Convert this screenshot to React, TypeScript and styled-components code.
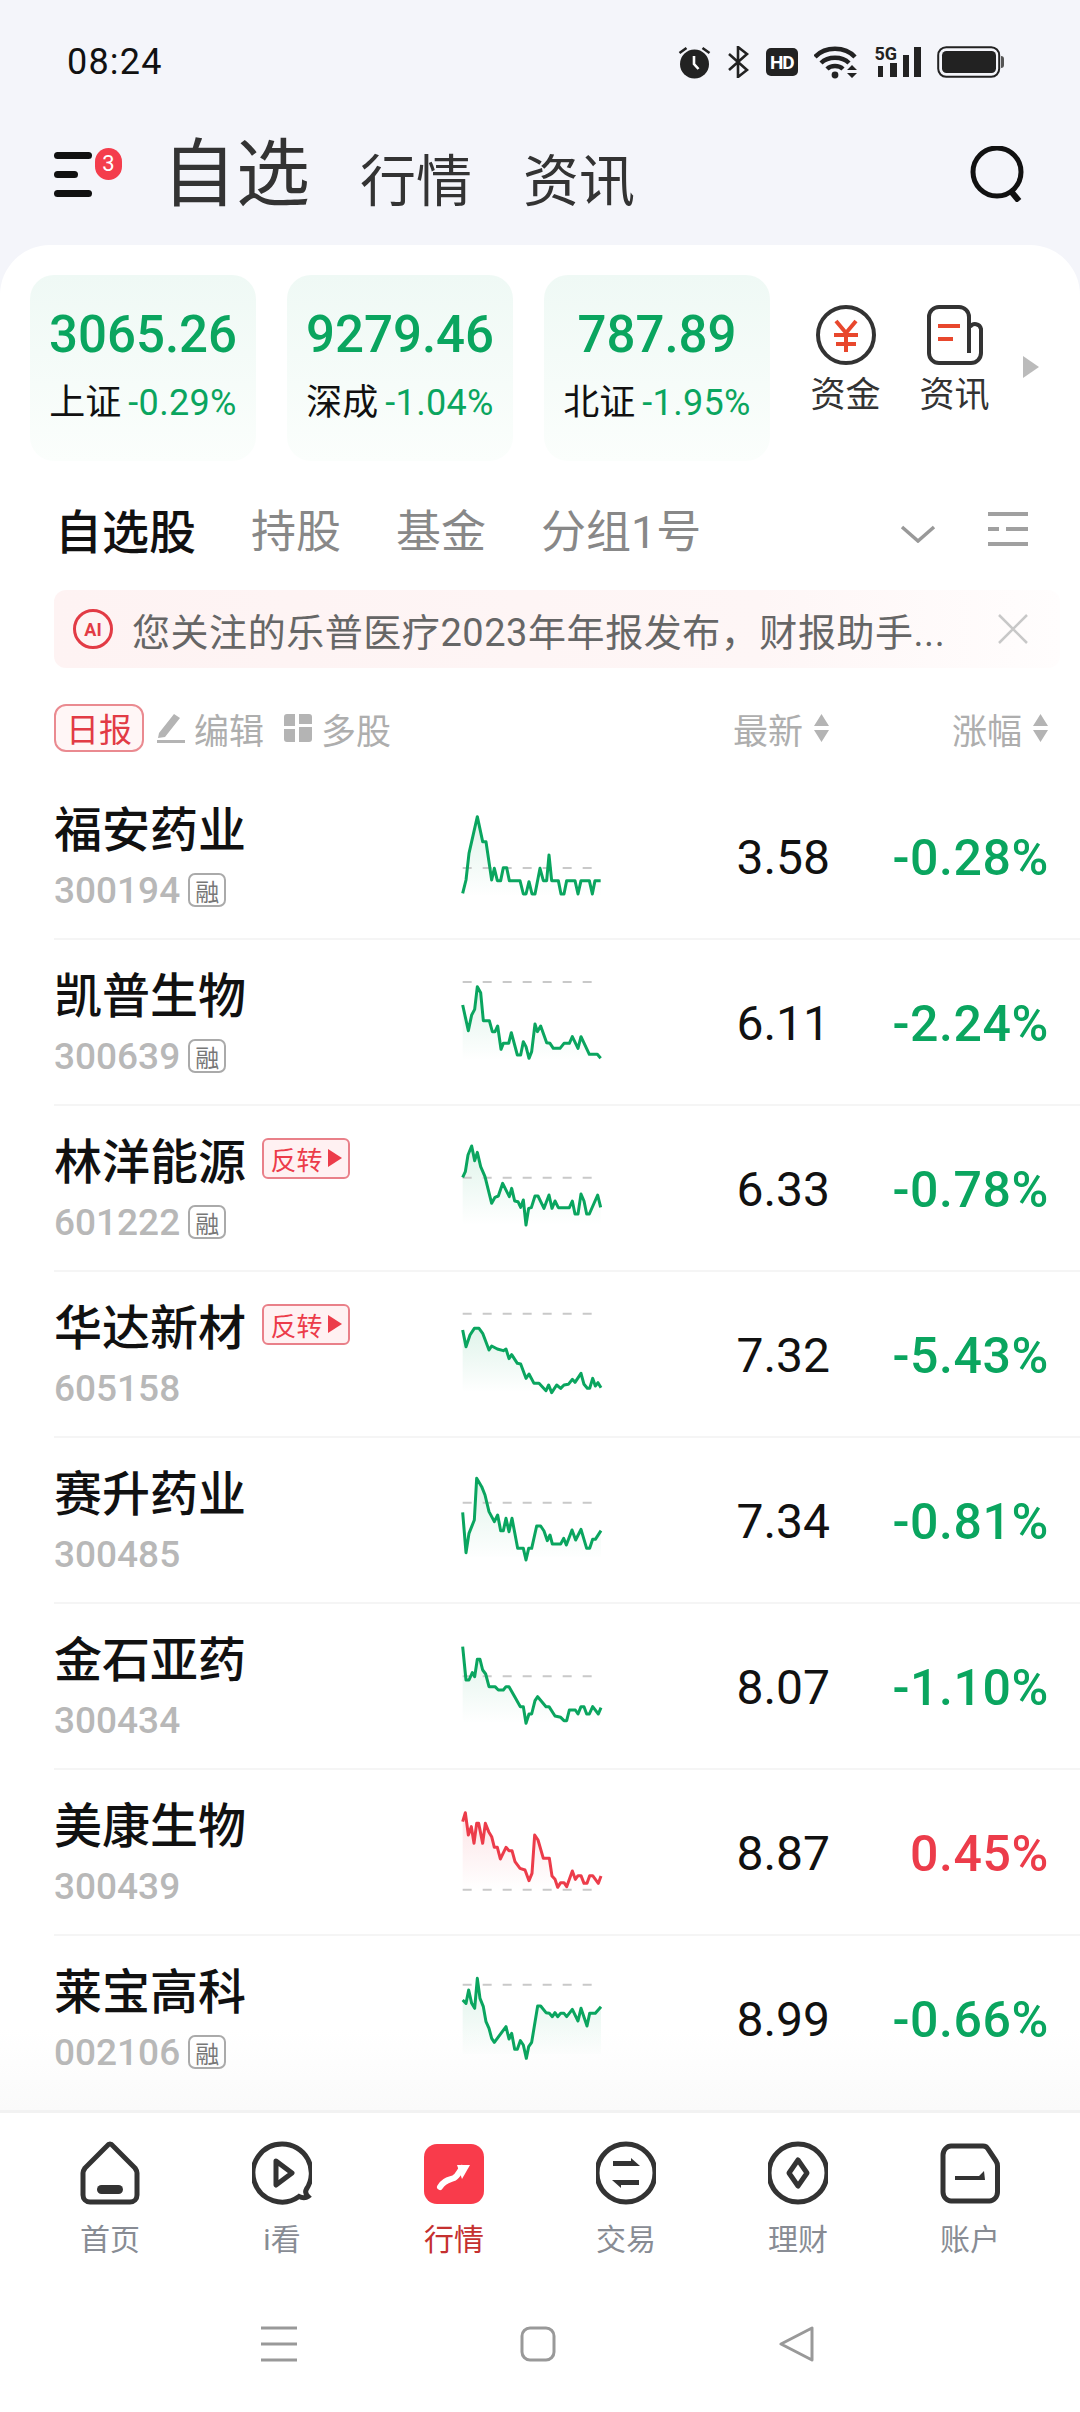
import React from "react";
import styled, { createGlobalStyle } from "styled-components";

const GREEN = "#0aa55f";
const RED = "#ec3c4a";
const INK = "#333333";

interface Stock {
  name: string;
  code: string;
  price: string;
  pct: string;
  rong?: boolean;
  flip?: boolean;
  up?: boolean;
  top: number; // y of the row's top edge in spark coords
  dash: number;
  floor: number;
  spark: string;
}

// spark coords are 3x px, traced off the chart strips
const stocks: Stock[] = [
  {
    name: "福安药业", code: "300194", price: "3.58", pct: "-0.28%", rong: true, top: -54, dash: 234, floor: 320,
    spark: "68,310 78,270 87,190 112,80 128,155 138,155 155,270 163,235 172,272 182,272 190,233 200,233 208,272 240,272 250,312 258,312 267,275 276,312 285,312 300,235 310,272 320,272 327,195 335,272 355,272 363,312 372,312 380,272 405,272 414,312 423,272 448,272 457,312 465,272 482,272",
  },
  {
    name: "凯普生物", code: "300639", price: "6.11", pct: "-2.24%", rong: true, top: 444, dash: 576, floor: 812,
    spark: "68,645 85,722 95,675 104,658 112,590 122,608 130,692 148,692 157,725 165,725 173,708 183,778 190,760 206,760 214,728 232,795 242,795 250,755 258,770 267,805 275,785 285,702 292,725 302,708 320,758 330,760 340,775 360,775 372,760 388,760 397,740 414,775 423,740 448,793 472,793 482,805",
  },
  {
    name: "林洋能源", code: "601222", price: "6.33", pct: "-0.78%", rong: true, flip: true, top: -48, dash: 173, floor: 312,
    spark: "68,172 76,155 84,105 95,78 104,122 112,97 122,140 135,170 155,250 165,232 175,228 188,190 208,230 215,205 224,243 234,245 242,262 250,240 258,315 266,265 274,263 285,228 294,228 312,265 327,225 336,265 345,243 355,263 388,263 397,243 405,282 414,282 423,222 432,243 440,282 448,282 473,225 482,262",
  },
  {
    name: "华达新材", code: "605158", price: "7.32", pct: "-5.43%", flip: true, top: 450, dash: 581, floor: 815,
    spark: "68,630 78,680 90,645 103,625 117,625 128,640 147,690 155,678 172,687 190,692 198,687 207,716 215,704 232,730 242,732 258,775 267,762 282,790 297,790 318,812 326,795 335,818 350,795 362,805 372,795 385,793 397,778 405,787 423,760 432,793 442,805 449,805 458,775 466,798 474,788 483,803",
  },
  {
    name: "赛升药业", code: "300485", price: "7.34", pct: "-0.81%", top: -42, dash: 158, floor: 320,
    spark: "68,187 78,308 87,250 103,210 110,85 125,110 135,135 147,185 163,215 173,195 182,242 190,242 198,205 207,245 216,205 233,295 250,295 258,330 266,295 275,295 290,228 302,228 312,243 322,272 330,255 337,282 362,282 371,265 379,285 396,240 407,270 423,238 440,295 449,295 458,268 466,268 483,242",
  },
  {
    name: "金石亚药", code: "300434", price: "8.07", pct: "-1.10%", top: 456, dash: 679, floor: 818,
    spark: "68,590 78,690 87,690 97,668 104,680 112,628 120,628 128,660 137,672 147,710 165,710 175,720 190,720 198,710 207,710 225,742 241,770 250,770 258,820 267,792 275,792 285,752 293,740 318,770 327,770 345,798 362,802 372,812 380,812 388,780 406,780 414,792 423,770 432,770 440,792 448,792 458,770 475,792 483,773",
  },
  {
    name: "美康生物", code: "300439", price: "8.87", pct: "0.45%", up: true, top: -66, dash: 299, floor: 299,
    spark: "68,95 76,68 85,135 94,110 102,160 110,100 116,100 128,160 136,100 146,125 155,140 163,172 172,172 181,207 198,172 207,182 216,182 225,215 240,235 255,240 267,272 276,250 284,135 294,150 310,205 328,205 336,258 345,268 353,292 362,278 372,278 380,290 397,243 406,268 414,257 423,257 432,280 441,280 449,257 458,257 475,280 483,258",
  },
  {
    name: "莱宝高科", code: "002106", price: "8.99", pct: "-0.66%", rong: true, top: 432, dash: 584, floor: 792,
    spark: "68,630 78,640 86,600 95,640 104,655 112,565 120,625 130,650 138,695 147,715 155,745 163,757 198,710 207,747 215,730 224,778 232,778 241,752 250,765 259,805 266,770 275,757 293,648 302,648 318,668 328,670 337,680 345,668 353,680 362,670 372,670 380,680 397,658 414,693 423,655 441,708 449,670 466,670 483,650",
  },
];

const indices = [
  { value: "3065.26", name: "上证", pct: "-0.29%" },
  { value: "9279.46", name: "深成", pct: "-1.04%" },
  { value: "787.89", name: "北证", pct: "-1.95%" },
];

function Spark({ stock, id }: { stock: Stock; id: string }) {
  const color = stock.up ? RED : GREEN;
  const first = stock.spark.split(" ")[0].split(",")[0];
  const last = stock.spark.split(" ").slice(-1)[0].split(",")[0];
  const area = `${first},${stock.floor} ${stock.spark} ${last},${stock.floor}`;
  return (
    <SparkSvg viewBox={`60 ${stock.top} 432 498`}>
      <defs>
        <linearGradient id={id} x1="0" y1="0" x2="0" y2="1">
          <stop offset="0" stopColor={color} stopOpacity={stock.up ? 0.14 : 0.13} />
          <stop offset="1" stopColor={color} stopOpacity="0" />
        </linearGradient>
      </defs>
      <polygon points={area} fill={`url(#${id})`} />
      <line x1="68" x2="456" y1={stock.dash} y2={stock.dash} stroke="#c9c9c9" strokeWidth="6" strokeDasharray="27 33" />
      <polyline points={stock.spark} fill="none" stroke={color} strokeWidth="9" strokeLinejoin="round" />
    </SparkSvg>
  );
}

function SortArrows() {
  return (
    <svg width="17" height="28" viewBox="0 0 17 28">
      <path d="M8.5 0 L16 12 H1 Z M1 16 H16 L8.5 28 Z" fill="#b4b4b4" />
    </svg>
  );
}

function StatusIcons() {
  return (
    <StatusIconRow>
      <svg width="33" height="34" viewBox="0 0 33 34">
        <circle cx="16.5" cy="19" r="14.5" fill="#222" />
        <path d="M16 11v8l4.500 5" fill="none" stroke="#fff" strokeWidth="2.6" />
        <path d="M1.500 8l7-5M31.500 8l-7-5" stroke="#222" strokeWidth="2.6" />
      </svg>
      <svg width="22" height="32" viewBox="0 0 22 32">
        <path d="M2 8l18 16-9 7V1l9 7L2 24" fill="none" stroke="#222" strokeWidth="2.6" />
      </svg>
      <HdChip>HD</HdChip>
      <svg width="44" height="34" viewBox="0 0 44 34">
        <path d="M1 12C11 1 31 1 41 12M7 18c7-7 21-7 28 0M13 24c4-4 12-4 16 0" fill="none" stroke="#222" strokeWidth="4.400" />
        <circle cx="21" cy="30" r="3.400" fill="#222" />
        <path d="M33 25h10l-5-5zM33 28h10l-5 5z" fill="#222" />
      </svg>
      <SignalWrap>
        <NetworkLabel>5G</NetworkLabel>
        <svg width="46" height="32" viewBox="0 0 46 32">
          <path d="M3 20h5v11H3zM15 17h7v14h-7zM28 9h6v22h-6zM39 1h7v30h-7z" fill="#222" />
        </svg>
      </SignalWrap>
      <svg width="67" height="32" viewBox="0 0 67 32">
        <rect x="1.200" y="1.200" width="61" height="29.600" rx="8" fill="none" stroke="#222" strokeWidth="2" />
        <rect x="5" y="5" width="54" height="22" rx="4.500" fill="#222" />
        <path d="M64 10c2 0 3 1 3 3v6c0 2-1 3-3 3z" fill="#555" />
      </svg>
    </StatusIconRow>
  );
}

const navItems = [
  {
    label: "首页",
    icon: (
      <>
        <path d="M30 3c-1 0-2 .6-3 2L5 27c-1 1.500-2 3-2 5v22c0 4 3 7 7 7h40c4 0 7-3 7-7V32c0-2-1-3.500-2-5L33 5c-1-1.400-2-2-3-2z" fill="none" stroke={INK} strokeWidth="5" />
        <rect x="17" y="44" width="26" height="9" rx="4.500" fill={INK} />
      </>
    ),
  },
  {
    label: "i看",
    icon: (
      <>
        <path d="M30 3a29 29 0 1 0 17 52.500c3 1.500 7 1.500 9 0-2-2-3-5-1.500-7.500A29 29 0 0 0 30 3z" fill="none" stroke={INK} strokeWidth="5" />
        <path d="M24 20l16 12-16 12z" fill="none" stroke={INK} strokeWidth="5" strokeLinejoin="round" />
      </>
    ),
  },
  {
    label: "行情",
    active: true,
    icon: (
      <>
        <rect x="0" y="3" width="60" height="60" rx="13" fill="#f93b4b" />
        <path d="M16 46c4-7 9-7 14-9 4-2 5-6 8-10" fill="none" stroke="#fff" strokeWidth="6" strokeLinecap="round" />
        <path d="M33 24h13l-8 14z" fill="#fff" />
      </>
    ),
  },
  {
    label: "交易",
    icon: (
      <>
        <circle cx="30" cy="32" r="29" fill="none" stroke={INK} strokeWidth="5" />
        <path d="M17 25h27l-9-8v3H17zM43 39H16l9 8v-3h18z" fill={INK} />
      </>
    ),
  },
  {
    label: "理财",
    icon: (
      <>
        <circle cx="30" cy="32" r="29" fill="none" stroke={INK} strokeWidth="5" />
        <path d="M30 19l9 13-9 13-9-13z" fill="none" stroke={INK} strokeWidth="5" strokeLinejoin="round" />
      </>
    ),
  },
  {
    label: "账户",
    icon: (
      <>
        <path d="M11 5h32c3 0 4 1 5 3l8 12c1 1.500 1.500 3 1.500 5v26c0 5-4 9-8 9H11c-4 0-8-4-8-9V14c0-5 4-9 8-9z" fill="none" stroke={INK} strokeWidth="5" />
        <path d="M15 35h24l5-5 1 9H15z" fill={INK} />
      </>
    ),
  },
];

export default function App() {
  return (
    <Page>
      <GlobalStyle />
      <StatusBar>
        <Clock>08:24</Clock>
        <StatusIcons />
      </StatusBar>

      <Header>
        <MenuButton>
          <MenuLine $w={38} />
          <MenuLine $w={24} />
          <MenuLine $w={38} />
          <CountBadge>3</CountBadge>
        </MenuButton>
        <MainTitle>自选</MainTitle>
        <SubTitle>行情</SubTitle>
        <SubTitle>资讯</SubTitle>
        <SearchIcon width="56" height="56" viewBox="0 0 56 56">
          <circle cx="27" cy="26" r="24" fill="none" stroke="#111" strokeWidth="5" />
          <path d="M40 44l9 11" stroke="#111" strokeWidth="6" />
        </SearchIcon>
      </Header>

      <Panel>
        <IndexRow>
          {indices.map((idx) => (
            <IndexCard key={idx.name}>
              <IndexValue>{idx.value}</IndexValue>
              <IndexSub>
                {idx.name}
                <IndexPct>{idx.pct}</IndexPct>
              </IndexSub>
            </IndexCard>
          ))}
          <QuickLink>
            <svg width="60" height="60" viewBox="0 0 60 60">
              <circle cx="30" cy="30" r="28" fill="none" stroke={INK} strokeWidth="4" />
              <path d="M20 16l10 12 10-12M18 30h24M20 39h20M30 28v19" fill="none" stroke="#e8472d" strokeWidth="4" />
            </svg>
            <QuickLabel>资金</QuickLabel>
          </QuickLink>
          <QuickLink>
            <svg width="56" height="60" viewBox="0 0 56 60">
              <path d="M42 48V12A10 10 0 0 0 32 2H12A10 10 0 0 0 2 12V48A10 10 0 0 0 12 58H44A10 10 0 0 0 54 48V24A6 6 0 0 0 43 22" fill="none" stroke={INK} strokeWidth="4" />
              <path d="M11 21H33" stroke="#e8472d" strokeWidth="4" />
              <path d="M11 34H26" stroke="#e8472d" strokeWidth="4" />
            </svg>
            <QuickLabel>资讯</QuickLabel>
          </QuickLink>
          <MoreArrow />
        </IndexRow>

        <TabRow>
          <Tab $active>自选股</Tab>
          <Tab>持股</Tab>
          <Tab>基金</Tab>
          <Tab>分组1号</Tab>
          <TabChevron width="36" height="18" viewBox="0 0 36 18">
            <path d="M2 2l16 14L34 2" fill="none" stroke="#999" strokeWidth="3.500" />
          </TabChevron>
          <svg width="40" height="34" viewBox="0 0 40 34">
            <path d="M0 2h40M0 17h11M18 17h22M0 32h40" stroke="#a0a0a0" strokeWidth="4" />
          </svg>
        </TabRow>

        <Notice>
          <AiMark>AI</AiMark>
          <NoticeText>您关注的乐普医疗2023年年报发布，财报助手...</NoticeText>
          <svg width="30" height="30" viewBox="0 0 30 30">
            <path d="M1 1l28 28M29 1L1 29" stroke="#c8c8c8" strokeWidth="2.500" />
          </svg>
        </Notice>

        <Toolbar>
          <ReportTag>日报</ReportTag>
          <ToolItem>
            <svg width="28" height="30" viewBox="0 0 28 30">
              <path d="M2 20L17 1l6 4L8 24l-7 1zM0 27h28v3H0z" fill="#b4b4b4" />
            </svg>
            编辑
          </ToolItem>
          <ToolItem>
            <svg width="28" height="28" viewBox="0 0 28 28">
              <path d="M0 3a3 3 0 0 1 3-3h8v12H0zM15 0h10a3 3 0 0 1 3 3v7H15zM0 15h11v13H3a3 3 0 0 1-3-3zM15 13h13v12a3 3 0 0 1-3 3H15z" fill="#b4b4b4" />
            </svg>
            多股
          </ToolItem>
          <SortHead $first>
            最新
            <SortArrows />
          </SortHead>
          <SortHead>
            涨幅
            <SortArrows />
          </SortHead>
        </Toolbar>

        <StockList>
          {stocks.map((s, i) => (
            <StockRow key={s.code} $first={i === 0}>
              <NameCol>
                <NameLine>
                  {s.name}
                  {s.flip && (
                    <FlipBadge>
                      反转
                      <svg width="14" height="18" viewBox="0 0 14 18">
                        <path d="M0 0l14 9-14 9z" fill={RED} />
                      </svg>
                    </FlipBadge>
                  )}
                </NameLine>
                <CodeLine>
                  {s.code}
                  {s.rong && <RongTag>融</RongTag>}
                </CodeLine>
              </NameCol>
              <Spark stock={s} id={`spark-${i}`} />
              <Price>{s.price}</Price>
              <Change $up={s.up}>{s.pct}</Change>
            </StockRow>
          ))}
        </StockList>

        <BottomNav>
          {navItems.map((item) => (
            <NavItem key={item.label} $active={item.active}>
              <svg width="60" height="66" viewBox="0 0 60 66">
                {item.icon}
              </svg>
              {item.label}
            </NavItem>
          ))}
        </BottomNav>

        <GestureBar>
          <svg width="36" height="36" viewBox="0 0 36 36">
            <path d="M0 2h36M0 18h36M0 34h36" stroke="#999" strokeWidth="3" />
          </svg>
          <svg width="36" height="36" viewBox="0 0 36 36">
            <rect x="2" y="2" width="32" height="32" rx="8" fill="none" stroke="#999" strokeWidth="3" />
          </svg>
          <svg width="36" height="36" viewBox="0 0 36 36">
            <path d="M33 2v32L2 18z" fill="none" stroke="#999" strokeWidth="3" strokeLinejoin="round" />
          </svg>
        </GestureBar>
      </Panel>
    </Page>
  );
}

const GlobalStyle = createGlobalStyle`
  html, body {
    margin: 0;
    padding: 0;
    background: #fff;
    font-family: Roboto, "Noto Sans CJK SC", sans-serif;
  }
  * {
    box-sizing: border-box;
  }
`;

const Page = styled.div`
  width: 1080px;
  height: 2412px;
  display: flex;
  flex-direction: column;
  overflow: hidden;
  background: #f4f5fa;
`;

const StatusBar = styled.div`
  height: 124px;
  flex: none;
  display: flex;
  align-items: center;
  justify-content: space-between;
  padding: 0 76px 0 67px;
`;

const Clock = styled.span`
  font-size: 36px;
  letter-spacing: 1.2px;
  color: #111;
`;

const StatusIconRow = styled.div`
  display: flex;
  align-items: center;
  gap: 16.4px;
`;

const HdChip = styled.span`
  width: 32px;
  height: 28px;
  display: flex;
  align-items: center;
  justify-content: center;
  background: #222;
  border-radius: 5px;
  color: #fff;
  font-size: 19px;
  font-weight: 700;
  letter-spacing: -1px;
`;

const SignalWrap = styled.div`
  position: relative;
  display: flex;
`;

const NetworkLabel = styled.span`
  position: absolute;
  left: 0;
  top: 0;
  font-size: 18px;
  line-height: 16px;
  font-weight: 700;
  letter-spacing: -0.3px;
  color: #222;
`;

const Header = styled.div`
  height: 121px;
  flex: none;
  display: flex;
  align-items: center;
  padding: 0 54px 21px 54px;
`;

const MenuButton = styled.div`
  position: relative;
  width: 108px;
  height: 45px;
  display: flex;
  flex-direction: column;
  justify-content: space-between;
  align-items: flex-start;
`;

const MenuLine = styled.span<{ $w: number }>`
  width: ${(p) => p.$w}px;
  height: 7px;
  border-radius: 4px;
  background: #111;
`;

const CountBadge = styled.span`
  position: absolute;
  left: 41px;
  top: -4px;
  width: 27px;
  height: 32px;
  border-radius: 14px;
  background: #f43d4c;
  color: #fff;
  font-size: 22px;
  display: flex;
  align-items: center;
  justify-content: center;
`;

const MainTitle = styled.span`
  font-size: 74px;
  line-height: 80px;
  padding-top: 2px;
  color: ${INK};
  margin-right: 50px;
`;

const SubTitle = styled.span`
  font-size: 56px;
  line-height: 70px;
  color: ${INK};
  margin-right: 51px;
  padding-top: 16px;
`;

const SearchIcon = styled.svg`
  margin-left: auto;
  margin-right: 0;
`;

const Panel = styled.div`
  flex: 1;
  min-height: 0;
  display: flex;
  flex-direction: column;
  background: #fff;
  border-radius: 50px 50px 0 0;
`;

const IndexRow = styled.div`
  height: 216px;
  flex: none;
  display: flex;
  padding: 30px 0 0 30px;
`;

const IndexCard = styled.div`
  width: 226px;
  height: 186px;
  margin-right: 31px;
  padding-top: 30px;
  display: flex;
  flex-direction: column;
  align-items: center;
  border-radius: 24px;
  background: linear-gradient(180deg, #eff9f5 0%, #fbfefc 100%);
`;

const IndexValue = styled.div`
  font-size: 51px;
  line-height: 60px;
  font-weight: 500;
  color: ${GREEN};
`;

const IndexSub = styled.div`
  margin-top: 18px;
  font-size: 36px;
  line-height: 40px;
  color: #111;
  white-space: nowrap;
`;

const IndexPct = styled.span`
  margin-left: 7px;
  font-size: 36px;
  letter-spacing: 0.3px;
  color: ${GREEN};
`;

const QuickLink = styled.div`
  width: 109px;
  display: flex;
  flex-direction: column;
  align-items: center;
  padding-top: 30px;
  margin-left: -10px;
  margin-right: 10px;
  font-size: 35px;
  color: ${INK};
  &:first-of-type {
    margin-left: 0;
  }
`;

const QuickLabel = styled.span`
  margin-top: 6px;
  line-height: 50px;
`;

const MoreArrow = styled.span`
  width: 0;
  height: 0;
  margin-top: 81px;
  margin-left: 4px;
  border-left: 16px solid #bbb;
  border-top: 11px solid transparent;
  border-bottom: 11px solid transparent;
`;

const TabRow = styled.div`
  height: 129px;
  flex: none;
  display: flex;
  align-items: center;
  gap: 55px;
  padding: 6px 52px 0 55px;
`;

const Tab = styled.span<{ $active?: boolean }>`
  font-size: ${(p) => (p.$active ? 47 : 45)}px;
  font-weight: ${(p) => (p.$active ? 500 : 400)};
  color: ${(p) => (p.$active ? "#111" : "#888")};
`;

const TabChevron = styled.svg`
  margin-left: auto;
  margin-right: -3px;
  margin-top: 10px;
`;

const Notice = styled.div`
  height: 78px;
  flex: none;
  margin: 0 20px 0 54px;
  padding: 0 32px 0 19px;
  display: flex;
  align-items: center;
  border-radius: 12px;
  background: linear-gradient(90deg, #fef3f3 0%, #fef6f6 70%, #fffdfd 100%);
`;

const AiMark = styled.span`
  width: 40px;
  height: 40px;
  flex: none;
  display: flex;
  align-items: center;
  justify-content: center;
  border: 3px solid #e23b45;
  border-radius: 50%;
  color: #e23b45;
  font-size: 18px;
  font-weight: 700;
`;

const NoticeText = styled.span`
  flex: 1;
  margin-left: 19px;
  font-size: 38px;
  letter-spacing: 0.55px;
  color: #666;
  white-space: nowrap;
`;

const Toolbar = styled.div`
  height: 104px;
  flex: none;
  display: flex;
  align-items: center;
  padding: 16px 31px 0 54px;
`;

const ReportTag = styled.span`
  width: 90px;
  height: 48px;
  display: flex;
  align-items: center;
  justify-content: center;
  margin-right: 13px;
  border: 2px solid #ea8a90;
  border-radius: 12px;
  background: #fff6f6;
  color: #e23b45;
  font-size: 33px;
`;

const ToolItem = styled.span`
  display: flex;
  align-items: center;
  gap: 9px;
  margin-right: 20px;
  font-size: 35px;
  color: #aeaeae;
`;

const SortHead = styled.span<{ $first?: boolean }>`
  display: flex;
  align-items: center;
  gap: 10px;
  margin-left: ${(p) => (p.$first ? "auto" : "122px")};
  font-size: 35px;
  color: #aeaeae;
`;

const StockList = styled.div`
  flex: 1;
  min-height: 0;
  overflow: hidden;
  background: linear-gradient(180deg, #fff 94%, #fafafa 100%);
`;

const StockRow = styled.div<{ $first?: boolean }>`
  height: 166px;
  margin-left: 54px;
  display: flex;
  align-items: center;
  box-shadow: ${(p) => (p.$first ? "none" : "inset 0 2px 0 #f5f5f5")};
`;

const NameCol = styled.div`
  width: 406px;
  height: 166px;
  flex: none;
  padding-top: 26px;
`;

const NameLine = styled.div`
  display: flex;
  align-items: center;
  height: 56px;
  font-size: 48px;
  font-weight: 500;
  color: #111;
`;

const FlipBadge = styled.span`
  height: 41px;
  width: 88px;
  margin-left: 16px;
  display: flex;
  align-items: center;
  justify-content: center;
  gap: 5px;
  border: 2px solid #e98089;
  border-radius: 6px;
  background: #fff1f2;
  color: ${RED};
  font-size: 26px;
  font-weight: 400;
`;

const CodeLine = styled.div`
  display: flex;
  align-items: center;
  height: 44px;
  margin-top: 14px;
  font-size: 37px;
  font-weight: 500;
  color: #b8b8b8;
`;

const RongTag = styled.span`
  width: 38px;
  height: 34px;
  margin-left: 8px;
  display: flex;
  align-items: center;
  justify-content: center;
  border: 2px solid #aaa;
  border-radius: 7px;
  color: #777;
  font-size: 24px;
  font-weight: 400;
`;

const SparkSvg = styled.svg`
  width: 144px;
  height: 166px;
  flex: none;
`;

const Price = styled.span`
  width: 226px;
  flex: none;
  padding-top: 5px;
  text-align: right;
  font-size: 48px;
  color: #111;
`;

const Change = styled.span<{ $up?: boolean }>`
  width: 219px;
  flex: none;
  padding-top: 5px;
  text-align: right;
  font-size: 50px;
  font-weight: 500;
  letter-spacing: 0.6px;
  color: ${(p) => (p.$up ? RED : GREEN)};
`;

const BottomNav = styled.div`
  height: 190px;
  flex: none;
  display: grid;
  grid-template-columns: repeat(6, 172px);
  padding: 28px 24px 0;
  border-top: 3px solid #f2f2f2;
`;

const NavItem = styled.div<{ $active?: boolean }>`
  display: flex;
  flex-direction: column;
  align-items: center;
  gap: 11px;
  font-size: 30px;
  line-height: 44px;
  color: ${(p) => (p.$active ? "#c5302f" : "#888c94")};
`;

const GestureBar = styled.div`
  height: 112px;
  flex: none;
  display: grid;
  grid-template-columns: repeat(3, 36px);
  justify-content: center;
  column-gap: 223px;
  padding: 26px 4px 0 0;
`;
